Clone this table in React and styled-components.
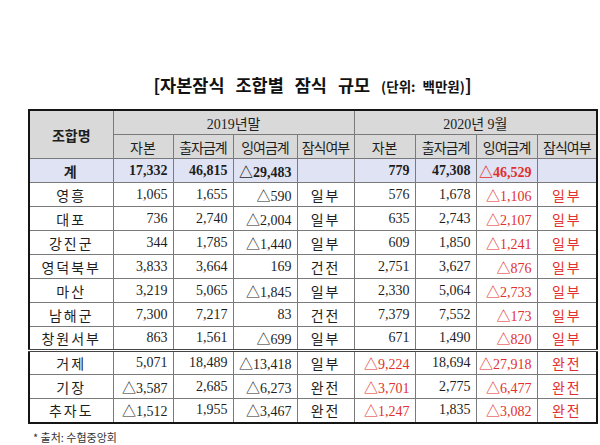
import React from "react";
import styled, { createGlobalStyle } from "styled-components";

const GlobalStyle = createGlobalStyle`
  html, body {
    margin: 0;
    padding: 0;
    background: #ffffff;
  }
  body {
    font-family: "Liberation Serif", "Noto Sans CJK KR", serif;
    color: #1e1e1e;
  }
`;

const Page = styled.div`
  width: 600px;
  height: 445px;
  padding: 75px 3px 0 28px;
  box-sizing: border-box;
  overflow: hidden;
`;

const Title = styled.h1`
  margin: 0 0 13px;
  width: 569px;
  text-align: center;
  font-family: "Noto Sans CJK KR", "Liberation Sans", sans-serif;
  font-weight: 700;
  font-size: 17.5px;
  line-height: 20px;
  word-spacing: 7px;
  color: #111;
`;

const Unit = styled.span`
  font-size: 13.5px;
  word-spacing: 4px;
`;

const Table = styled.table`
  border-collapse: collapse;
  table-layout: fixed;
  width: 569px;
  border: 2px solid #151515;
  font-size: 14px;
`;

const HeadCell = styled.th`
  background: #d9d9d9;
  border: 1px solid #7a7a7a;
  font-weight: ${p => (p.bold ? 700 : 400)};
  font-size: 14px;
  height: 23px;
  padding: 0;
  text-align: center;
  white-space: nowrap;
  letter-spacing: ${p => (p.tight ? "-1px" : "0")};
`;

const Row = styled.tr`
  height: 24px;
  background: ${p => (p.total ? "#dfe3f3" : "#ffffff")};
  font-weight: ${p => (p.total ? 700 : 400)};
  border-top: ${p => (p.split ? "3px double #444" : "none")};
`;

const Cell = styled.td`
  border: 1px solid #7a7a7a;
  padding: 0 5px 0 2px;
  text-align: ${p => (p.center ? "center" : "right")};
  color: ${p => (p.red ? "#e2302d" : "#1e1e1e")};
  white-space: nowrap;
  letter-spacing: ${p => (p.center ? "2px" : "0")};
  ${p => (p.center ? "padding: 0;" : "")}
`;

const Source = styled.div`
  margin: 5px 0 0 5px;
  font-family: "Noto Sans CJK KR", "Liberation Sans", sans-serif;
  font-size: 11px;
  color: #333;
`;

const widths = [84, 60, 60, 64, 57, 61, 61, 61, 60];

const rows = [
  ["계", "17,332", "46,815", "△29,483", "", "779", "47,308", "△46,529", ""],
  ["영흥", "1,065", "1,655", "△590", "일부", "576", "1,678", "△1,106", "일부"],
  ["대포", "736", "2,740", "△2,004", "일부", "635", "2,743", "△2,107", "일부"],
  ["강진군", "344", "1,785", "△1,440", "일부", "609", "1,850", "△1,241", "일부"],
  ["영덕북부", "3,833", "3,664", "169", "건전", "2,751", "3,627", "△876", "일부"],
  ["마산", "3,219", "5,065", "△1,845", "일부", "2,330", "5,064", "△2,733", "일부"],
  ["남해군", "7,300", "7,217", "83", "건전", "7,379", "7,552", "△173", "일부"],
  ["창원서부", "863", "1,561", "△699", "일부", "671", "1,490", "△820", "일부"],
  ["거제", "5,071", "18,489", "△13,418", "일부", "△9,224", "18,694", "△27,918", "완전"],
  ["기장", "△3,587", "2,685", "△6,273", "완전", "△3,701", "2,775", "△6,477", "완전"],
  ["추자도", "△1,512", "1,955", "△3,467", "완전", "△1,247", "1,835", "△3,082", "완전"],
];

const subHeads = ["자본", "출자금계", "잉여금계", "잠식여부"];

const App = () => {
  return (
    <Page>
      <GlobalStyle />
      <Title>
        [자본잠식 조합별 잠식 규모 <Unit>(단위: 백만원)</Unit>]
      </Title>
      <Table>
        <colgroup>
          {widths.map((w, i) => (
            <col key={i} style={{ width: w }} />
          ))}
        </colgroup>
        <thead>
          <tr>
            <HeadCell rowSpan={2} bold>조합명</HeadCell>
            <HeadCell colSpan={4}>2019년말</HeadCell>
            <HeadCell colSpan={4}>2020년 9월</HeadCell>
          </tr>
          <tr>
            {[...subHeads, ...subHeads].map((h, i) => (
              <HeadCell key={i} tight={h.length > 2}>{h}</HeadCell>
            ))}
          </tr>
        </thead>
        <tbody>
          {rows.map((r, ri) => (
            <Row key={ri} total={ri === 0} split={ri === 8}>
              {r.map((v, ci) => {
                const center = ci === 0 || ci === 4 || ci === 8;
                const red =
                  ci === 7 || ci === 8 || (ci === 5 && v.startsWith("△"));
                return (
                  <Cell key={ci} center={center} red={red}>
                    {v}
                  </Cell>
                );
              })}
            </Row>
          ))}
        </tbody>
      </Table>
      <Source>* 출처: 수협중앙회</Source>
    </Page>
  );
};

export default App;
